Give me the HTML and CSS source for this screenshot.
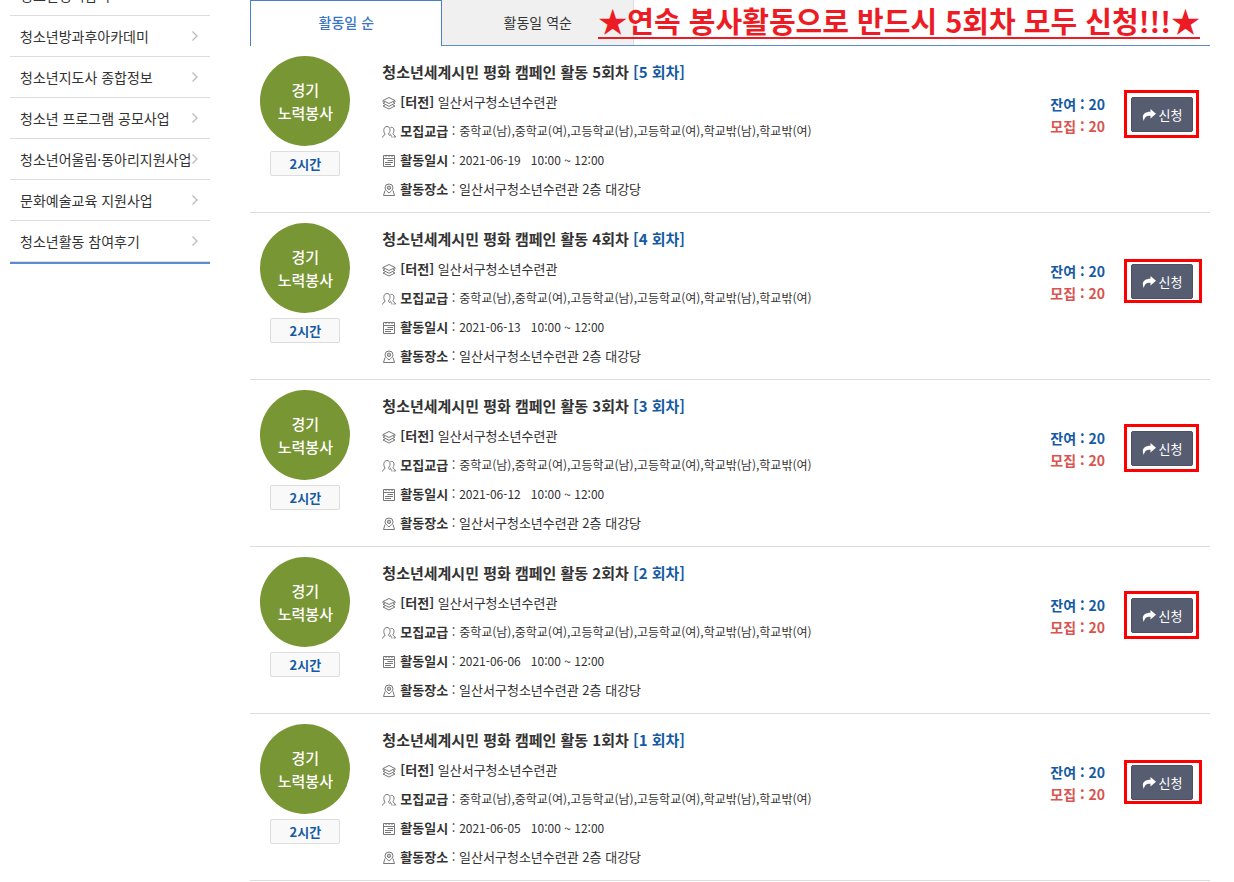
FILE: index.html
```html
<!DOCTYPE html>
<html lang="ko">
<head>
    <meta charset="UTF-8">
    <meta name="viewport" content="width=device-width, initial-scale=1.0">
    <title>청소년활동</title>
    <link rel="stylesheet" href="styles.css">
</head>
<body>
    <!-- shared icons -->
    <svg class="sprite" aria-hidden="true">
        <symbol id="i-arrow" viewBox="0 0 8 12"><path d="M1.5 1.5 6 6 1.5 10.5" fill="none" stroke="#bbb" stroke-width="1.3"/></symbol>
        <symbol id="i-layers" viewBox="0 0 14 14"><path d="M1 4.500 7 1.500l6 3-6 3zM1 4.500v1.500M13 4.500v1.500M3 6 1 7.200 7 10.300 13 7.200 11 6M3 9 1 10l6 3 6-3-2-1" fill="none" stroke="#777" stroke-linejoin="round"/></symbol>
        <symbol id="i-people" viewBox="0 0 14 14"><path d="M.5 12.500c0-2.500 3-2 2.500-3.500C1 6.500 1.500 1.500 5 1.500s4 5 1.500 7c-.5 1.500 1.500 1.500 2 2.500M8.500 2.500c3.500-1 4.500 3 2.500 6-.5 1.500 2.500 1.500 2.500 3.500h-2M8 8.500c.3 1.500 2 2 2 4" fill="none" stroke="#777"/></symbol>
        <symbol id="i-calendar" viewBox="0 0 14 14"><path d="M1.500 1.500h11v11h-11zM2 4.500h10" fill="none" stroke="#777"/><path d="M5.500 6.500h5.500M3 8.500h8M3 10.500h6" fill="none" stroke="#777"/><path d="M4 1v2M7 1v2M10 1v2" stroke="#777"/></symbol>
        <symbol id="i-place" viewBox="0 0 14 14"><path d="M7 10C4.500 8 3 6.500 3 4.800a4 3.800 0 0 1 8 0C11 6.500 9.500 8 7 10zM3 7.500 1.500 12.500h11L11 7.500" fill="none" stroke="#777"/><circle cx="7" cy="4.800" r="1.700" fill="#ccc" stroke="#777"/></symbol>
        <symbol id="i-share" viewBox="0 0 14 12"><path d="M8.500 0 14 4.800 8.500 9.500V6.800C5 6.600 2.800 7.500 1.800 12 -.8 6.500 2 2.800 8.500 2.800z" fill="#fff"/></symbol>
    </svg>

    <div class="container">
        <nav class="side">
            <ul class="side-menu">
                <li><a href="#">청소년정책참여</a><svg class="arrow"><use href="#i-arrow"/></svg></li>
                <li><a href="#">청소년방과후아카데미</a><svg class="arrow"><use href="#i-arrow"/></svg></li>
                <li><a href="#">청소년지도사 종합정보</a><svg class="arrow"><use href="#i-arrow"/></svg></li>
                <li><a href="#">청소년 프로그램 공모사업</a><svg class="arrow"><use href="#i-arrow"/></svg></li>
                <li><a href="#">청소년어울림·동아리지원사업</a><svg class="arrow"><use href="#i-arrow"/></svg></li>
                <li><a href="#">문화예술교육 지원사업</a><svg class="arrow"><use href="#i-arrow"/></svg></li>
                <li><a href="#">청소년활동 참여후기</a><svg class="arrow"><use href="#i-arrow"/></svg></li>
            </ul>
        </nav>

        <main class="content">
            <div class="tabs">
                <button type="button" class="tab active">활동일 순</button>
                <button type="button" class="tab">활동일 역순</button>
                <strong class="notice">★연속 봉사활동으로 반드시 5회차 모두 신청!!!★</strong>
            </div>
            <ul class="list" id="list"></ul>
        </main>
    </div>

    <script>
        const activities = [
            { no: 5, date: '2021-06-19', mark: '' },
            { no: 4, date: '2021-06-13', mark: 'wide' },
            { no: 3, date: '2021-06-12', mark: '' },
            { no: 2, date: '2021-06-06', mark: '' },
            { no: 1, date: '2021-06-05', mark: 'wide' }
        ];

        document.getElementById('list').innerHTML = activities.map(item => `
            <li class="item">
                <div class="kind">
                    <div class="circle">경기<br>노력봉사</div>
                    <div class="hours">2시간</div>
                </div>
                <div class="info">
                    <h3>청소년세계시민 평화 캠페인 활동 ${item.no}회차 <span>[${item.no} 회차]</span></h3>
                    <p><svg><use href="#i-layers"/></svg><b>[터전]</b> 일산서구청소년수련관</p>
                    <p><svg><use href="#i-people"/></svg><b>모집교급</b> : <span class="small">중학교(남),중학교(여),고등학교(남),고등학교(여),학교밖(남),학교밖(여)</span></p>
                    <p><svg><use href="#i-calendar"/></svg><b>활동일시</b> : <span class="small">${item.date} &nbsp; 10:00 ~ 12:00</span></p>
                    <p><svg><use href="#i-place"/></svg><b>활동장소</b> : 일산서구청소년수련관 2층 대강당</p>
                </div>
                <div class="apply">
                    <div class="count">
                        <div class="left">잔여 : 20</div>
                        <div class="total">모집 : 20</div>
                    </div>
                    <div class="mark ${item.mark}">
                        <button type="button" class="btn"><svg><use href="#i-share"/></svg>신청</button>
                    </div>
                </div>
            </li>`).join('');
    </script>
</body>
</html>
```
FILE: styles.css
```css
* {
    box-sizing: border-box;
}

body {
    margin: 0;
    background: #fff;
    color: #333;
    font-family: "Noto Sans CJK KR", sans-serif;
    font-size: 13px;
    overflow: hidden;
}

ul, h3, p {
    margin: 0;
    padding: 0;
    list-style: none;
}

button {
    font-family: inherit;
    cursor: pointer;
}

.sprite {
    display: none;
}

.container {
    display: flex;
    gap: 40px;
    padding: 0 24px 0 10px;
}

/* side menu */
.side {
    flex: 0 0 200px;
    margin-top: -25px;
}

.side-menu {
    border-bottom: 2px solid #5a8ccf;
}

.side-menu li {
    display: flex;
    align-items: center;
    justify-content: space-between;
    height: 41px;
    padding: 0 11px 0 10px;
    border-bottom: 1px solid #ddd;
}

.side-menu a {
    color: #333;
    font-size: 14px;
    white-space: nowrap;
    text-decoration: none;
}

.arrow {
    flex: none;
    width: 8px;
    height: 12px;
}

/* tabs */
.content {
    flex: 1;
    min-width: 0;
}

.tabs {
    position: relative;
    display: flex;
    height: 46px;
    border-bottom: 1px solid #5a8ccf;
}

.tab {
    width: 20%;
    padding: 0 0 2px;
    border: 0;
    border-right: 1px solid #ddd;
    background: #f0f0f0;
    color: #333;
    font-size: 14px;
}

.tab.active {
    height: 46px;
    padding-bottom: 3px;
    border: 1px solid #4a7fcb;
    border-bottom: 0;
    background: #fff;
    color: #3a75c4;
    font-weight: 500;
}

.notice {
    position: absolute;
    top: 3px;
    right: 10px;
    height: 36px;
    border-bottom: 2px solid #ed1c24;
    color: #ed1c24;
    font-size: 29px;
    line-height: 34px;
    white-space: nowrap;
}

/* activity list */
.item {
    display: flex;
    padding: 10px 0 9px 10px;
    border-bottom: 1px solid #ddd;
}

.kind {
    display: flex;
    flex-direction: column;
    align-items: center;
    gap: 5px;
    margin-right: 32px;
}

.circle {
    width: 90px;
    height: 90px;
    padding-top: 22px;
    border-radius: 50%;
    background: #789633;
    color: #fff;
    font-size: 15px;
    font-weight: 500;
    line-height: 23px;
    text-align: center;
}

.hours {
    width: 70px;
    border: 1px solid #ddd;
    border-radius: 2px;
    background: #f9f9f9;
    color: #155ba3;
    font-weight: 700;
    line-height: 23px;
    text-align: center;
}

.info {
    flex: 1;
    line-height: 29px;
}

.info h3 {
    font-size: 15px;
    font-weight: 700;
    line-height: 31px;
}

.info h3 span {
    color: #155ba3;
}

.info p {
    white-space: nowrap;
}

.info b {
    font-weight: 700;
}

.info svg {
    width: 14px;
    height: 14px;
    margin-right: 4px;
    vertical-align: -3px;
}

.small {
    font-size: 12px;
}

.apply {
    display: flex;
    align-items: center;
    gap: 26px;
    padding: 0 17px 30px 0;
}

.count {
    font-size: 14px;
    font-weight: 700;
    line-height: 22px;
}

.left {
    color: #155ba3;
}

.total {
    color: #d9534f;
}

.mark {
    position: relative;
}

.mark::after {
    content: "";
    position: absolute;
    inset: -7px -6px -6px -7px;
    border: 3px solid #f00;
    pointer-events: none;
}

.mark.wide::after {
    inset: -5px -9px -4px -7px;
}

.btn {
    display: flex;
    align-items: center;
    justify-content: center;
    gap: 3px;
    width: 62px;
    height: 35px;
    padding: 0;
    border: 1px solid #4b5165;
    border-radius: 2px;
    background: #575d70;
    color: #fff;
    font-size: 13px;
}

.btn svg {
    width: 14px;
    height: 12px;
}
```
